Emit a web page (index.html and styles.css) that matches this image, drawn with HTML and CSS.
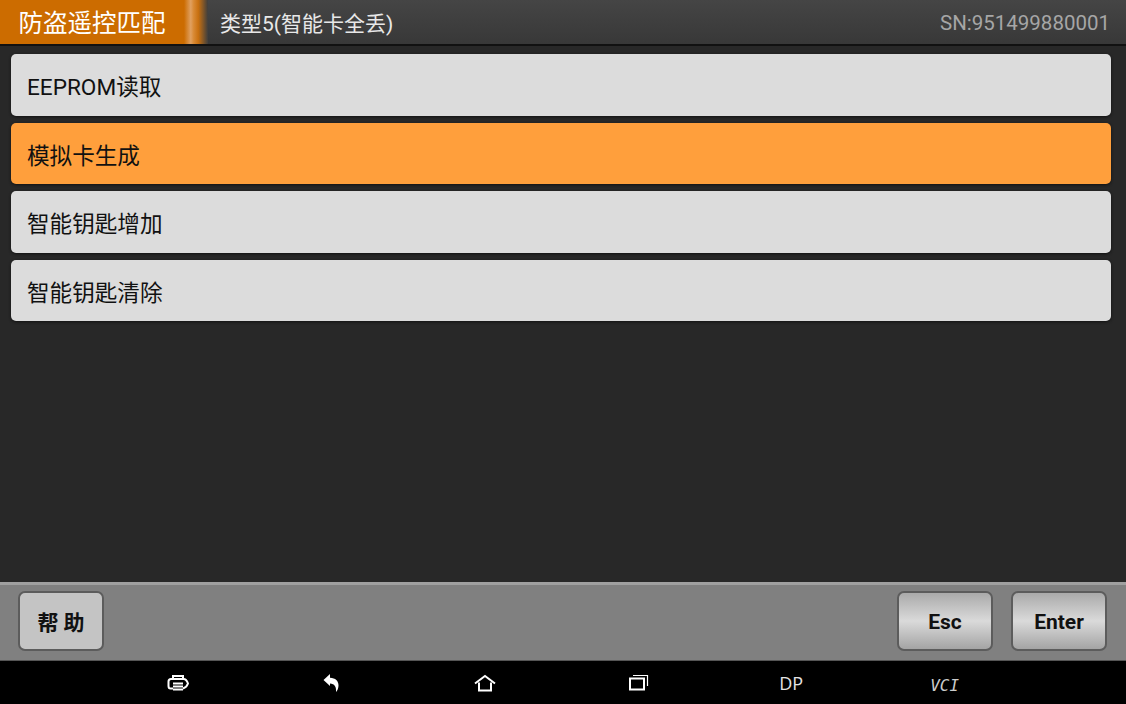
FILE: index.html
```html
<!DOCTYPE html>
<html>
<head>
<meta http-equiv="Content-Type" content="text/html; charset=utf-8">
<title>防盗遥控匹配</title>
<link rel="stylesheet" href="styles.css">
</head>
<body>
<div class="app">
  <div class="titlebar">
    <div class="tab">防盗遥控匹配</div>
    <div class="stripe"></div>
    <div class="subtitle">类型5(智能卡全丢)</div>
    <div class="serial">SN:951499880001</div>
  </div>
  <div class="list">
    <div class="row">EEPROM读取</div>
    <div class="row active">模拟卡生成</div>
    <div class="row">智能钥匙增加</div>
    <div class="row">智能钥匙清除</div>
  </div>
  <div class="toolbar">
    <div class="btn help">帮 助</div>
    <div class="spacer"></div>
    <div class="btn key">Esc</div>
    <div class="btn key">Enter</div>
  </div>
  <div class="nav">
    <div class="nav-item">
      <svg width="22" height="18" viewBox="0 0 22 18" fill="none" stroke="#fff" stroke-width="2">
        <path d="M6 5V2h10V5"/>
        <path d="M6 14.500H3.500Q1.500 14.500 1.500 12V7.500Q1.500 5 4 5H16.500Q19.500 5 21 9.500Q19.500 13.500 16 14.500"/>
        <path d="M6 9.500h10M6 12.500h10M6 15.500h10"/>
      </svg>
    </div>
    <div class="nav-item">
      <svg width="18" height="20" viewBox="0 0 18 20" fill="#fff">
        <path d="M1.500 7L8 1V4.800C13.500 5 16.500 8 16.500 12.500C16.500 15 15.500 17.500 14 19C14.500 14 12.500 10.500 8 10.500V13Z"/>
      </svg>
    </div>
    <div class="nav-item nudge-home">
      <svg width="22" height="18" viewBox="0 0 22 18" fill="none" stroke="#fff" stroke-width="2">
        <path d="M1 9.500L11 2L21 9.500"/>
        <path d="M5 8.500V16.500H17V8.500"/>
      </svg>
    </div>
    <div class="nav-item nudge-recent">
      <svg width="20" height="18" viewBox="0 0 20 18" fill="none" stroke="#fff">
        <rect x="1" y="4.500" width="14" height="11" stroke-width="2"/>
        <path d="M4 1.500H18.500V12" stroke-width="1.200"/>
      </svg>
    </div>
    <div class="nav-item nav-text">DP</div>
    <div class="nav-item nav-text vci">VCI</div>
  </div>
</div>
</body>
</html>
```

FILE: styles.css
```css
html, body { margin: 0; padding: 0; background: #282828; }
body { font-family: Roboto, "Noto Sans CJK SC", sans-serif; }
.app { display: flex; flex-direction: column; width: 1126px; height: 704px; overflow: hidden; }

/* top title bar */
.titlebar {
  display: flex;
  align-items: center;
  flex: none;
  height: 44px;
  border-bottom: 2px solid #111;
  background: linear-gradient(#454545, #383838);
}
.tab {
  display: flex;
  align-items: center;
  justify-content: center;
  width: 184px;
  height: 100%;
  padding-bottom: 1px;
  box-sizing: border-box;
  background: #cc6c00;
  color: #fff;
  font-size: 24.5px;
}
.stripe {
  flex: none;
  width: 24px;
  height: 100%;
  background: linear-gradient(to right, #cc6c00, #e0a060 28%, #d98a35 40%, #c87010 60%, #3e3e3e);
}
.subtitle { margin-left: 12px; color: #e8e8e8; font-size: 21px; }
.serial { margin-left: auto; margin-right: 16px; padding-top: 2px; color: #a6a6a6; font-size: 20.5px; }

/* menu rows */
.list {
  display: flex;
  flex-direction: column;
  flex: 1;
  gap: 7px;
  padding: 8.4px 15px 0 11px;
  background: #282828;
}
.row {
  display: flex;
  align-items: center;
  box-sizing: border-box;
  height: 61.5px;
  padding: 1px 0 0 16px;
  border-radius: 5px;
  background: #dcdcdc;
  box-shadow: 0 1px 3px #111;
  color: #111;
  font-size: 22.6px;
}
.row.active { background: #ff9f3c; }

/* bottom buttons */
.toolbar {
  display: flex;
  align-items: center;
  flex: none;
  gap: 18px;
  height: 71px;
  padding: 0 19px 4px 18px;
  border-top: 3px solid #a0a0a0;
  border-bottom: 1px solid #555;
  background: #808080;
}
.spacer { flex: 1; }
.btn {
  display: flex;
  align-items: center;
  justify-content: center;
  box-sizing: border-box;
  height: 60px;
  padding-top: 2px;
  border: 2px solid #5c5c5c;
  border-radius: 7px;
  color: #111;
  font-size: 21px;
  font-weight: 700;
}
.help { width: 86px; padding-top: 0; background: #c4c4c4; }
.key {
  width: 96px;
  background: linear-gradient(#aaa, #dadada 50%, #a4a4a4);
}

/* android nav bar */
.nav {
  display: grid;
  grid-template-columns: repeat(6, 153.4px);
  flex: none;
  height: 43px;
  padding-left: 101px;
  background: #000;
}
.nav-item {
  display: flex;
  align-items: center;
  justify-content: center;
  box-sizing: border-box;
  height: 43px;
}
.nudge-home { padding-left: 2px; }
.nudge-recent { padding-left: 3px; }
.nav-text { padding-top: 1px; color: #e4e4e4; font-family: "Open Sans", sans-serif; font-size: 18px; }
.vci { padding-top: 5px; color: #ccc; font-family: "DejaVu Sans Mono", monospace; font-size: 16px; font-style: italic; }
```
